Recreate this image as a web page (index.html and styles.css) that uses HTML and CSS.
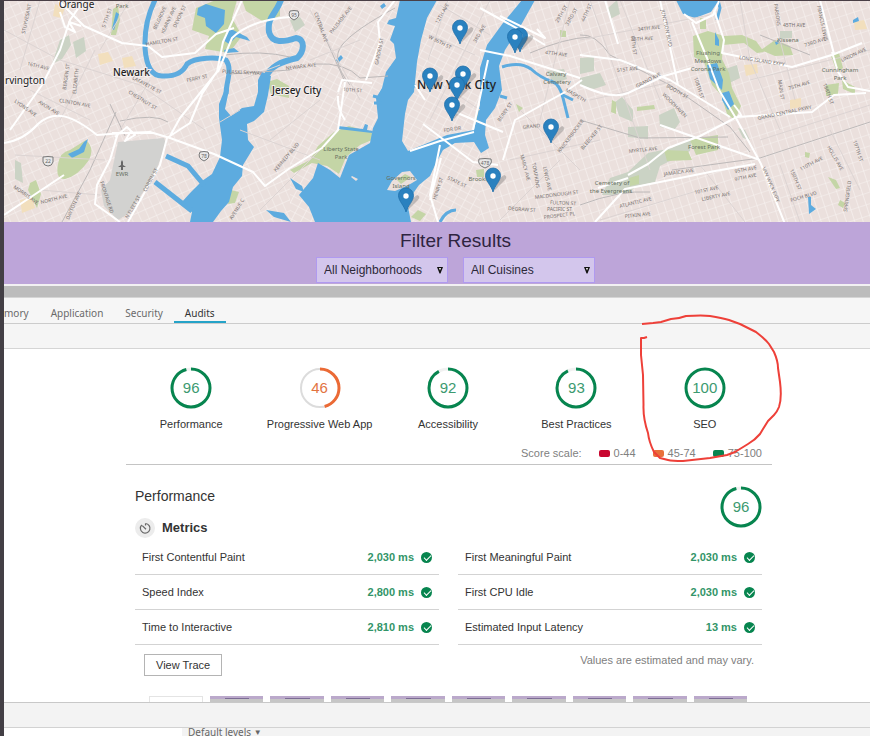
FILE: index.html
```html
<!DOCTYPE html>
<html lang="en">
<head>
<meta charset="utf-8">
<title>Restaurant Reviews audit</title>
<link rel="stylesheet" href="styles.css">
</head>
<body>
<svg class="map" viewBox="4 1 866 221" preserveAspectRatio="xMidYMid slice" role="img" aria-label="Map of New York City restaurants">
  <defs>
    <pattern id="grid-a" width="9" height="7" patternUnits="userSpaceOnUse" patternTransform="rotate(28)"><path d="M0 0H9M0 0V7" stroke="#f8f4f2" stroke-width="1.2"/></pattern>
    <pattern id="grid-b" width="8" height="11" patternUnits="userSpaceOnUse" patternTransform="rotate(-18)"><path d="M0 0H8M0 0V11" stroke="#f8f4f2" stroke-width="1.2"/></pattern>
    <pattern id="grid-c" width="10" height="8" patternUnits="userSpaceOnUse" patternTransform="rotate(66)"><path d="M0 0H10M0 0V8" stroke="#f8f4f2" stroke-width="1.1"/></pattern>
    <g id="pin">
      <path d="M1 15L12 4Q15 0 11-1L6 3Z" fill="#555" opacity=".3"/>
      <path d="M0 16C-1.500 10-7.500 5-7.500-.5A7.500 7.500 0 0 1 7.500-.5C7.500 5 1.500 10 0 16Z" fill="#2a81bf" stroke="#1f6fa9" stroke-width=".8"/>
      <circle r="2.700" fill="#fff"/>
    </g>
  </defs>
  <path class="land" d="M0 0H870V224H0Z"/>
  <path d="M0 0H290V224H0Z" fill="url(#grid-c)"/>
  <path d="M290 0H480V224H290Z" fill="url(#grid-a)"/>
  <path d="M480 0H870V224H480Z" fill="url(#grid-b)"/>

  <g class="beige">
    <path d="M98 54l10-2 5 9-13 4ZM122 58l10-2 4 10-12 2ZM20 200l12-2 3 10-13 5ZM744 65l13-1 1 9-12 3ZM790 100l11-2v9l-11 2ZM854 22l10-2 3 9-12 1ZM55 4l10 4-4 10-8-2Z"/>
  </g>
  <g class="cemetery">
    <path d="M73 42l11-5 2 14-10 7ZM60 40l9-5 2 10-9 14-10 5ZM608 8l9-8 3 14-10 5ZM580 58l14-1v14l-14 3ZM580 78l20-5 6 12-12 4-14-4ZM615 102l4 14 14 6v-12l-11-13ZM628 127l20-1v13l-20-2ZM659 115l15-7 6 14-5 7-15-2ZM722 70l15-5 3 13-15 7ZM547 71l17-2 3 10-14 5ZM780 31h12v7l-12 1ZM738 128l7 2 5 10-7-2ZM290 20l10-3 5 8-10 7ZM15 160l6 3 2 20-8-4Z"/>
    <path d="M602 195l8-17 18-6 20-19 24-5 20-11-2 14-30 15-5 16-18 4-9 7-17 2Z"/>
  </g>
  <path class="airport" d="M118 142L164 138 166 144 154 176 128 214 118 220 104 206 101 190 110 180Z"/>
  <g class="park">
    <path d="M196 8l20-8h21l-5 18 10 18-13 17-24-4 4-13-17-6Z"/>
    <path d="M242 0h38v16l-16 6-18-11Z"/>
    <path d="M113 9l5-3 2 14-4 15h-5ZM58 164q2-12 12-14l16-10q9 8 3 20-11 16-24 19-10 1-7-15ZM30 183l6-3 5 14-4 14-9-18ZM231 190l8 2-4 11-7 1ZM267 82l10-3 12 7v12l-18-4ZM290 170l20-10 8-14 16-14 15-6 24 7-1 7-12 5-14 12-7 17-12-8-15-3-18 10ZM360 152l8 1-4 8-6-1ZM434 155l5-2-6 16-4 3ZM476 118l6-16 1 14-7 12ZM516 104l7 4-4 4ZM476 170l8-1v8h-7Z"/>
    <path d="M693 36l15-5 16 5 18-1 14 6 8 11-7 1-13-10-21 2-1 14 7 14 3 15 9 18-6 14-8-6-6-19-9-10-8-23-10-5ZM761 50l14-10 15 6 3 9-18 1Z"/>
    <path d="M690 140l16-3 12-2v15l-22 5ZM664 150l24 1 4 9-25 1ZM629 178l10-3v9l-9 2ZM637 107l17-2 1 4-18 2ZM831 56l8-3 4 15-6 4ZM842 80l13 7v7l-12-5ZM826 85l13-2-1 11-12 2ZM828 177l8 3 4 8-4 1ZM612 100l4 2v12l-5-2ZM700 18l6 1v10h-6Z"/>
    <path d="M418 210l8 4-6 7-9-4ZM560 30l6 1v6h-6ZM805 152l5 1-1 5-4-1ZM840 200l5 3-2 5-5-3Z"/>
  </g>
  <g class="water">
    <path d="M198 8l8-4 19 6-1 14-8 9-10-7-1-8-8-3ZM223 40l6-12 18 9 3 4-14-4-7 7ZM224 50l10-2 5 4-14 1Z"/>
    <path d="M229 90L225 109 231 116 242 108 254 106 258 92 258 80 262 72 271 76 268 95 264 112 254 121 247 124 248 140 254 147 243 165 242 176 233 187 229 202 221 211 213 222H190L192 212 181 203 191 192 202 181 212 174 220 157 222 140 219 118 219 104 227 84Z"/>
    <path d="M400 0H437L427 18 421 40 417 62 414 92 408 100 405 114 402 141 408 151 430 142 447 135 474 130 480 105 480 68 487 45 503 23 522 0H535L520 27 505 50 499 66 502 90 495 108 486 120 485 135 489 148 481 153 474 142 455 143 443 150 435 165 430 176 419 185 407 202 411 222H315L309 207 299 195 313 178 318 163 330 170 340 178 349 155 370 143 373 128 378 118 376 98 382 88 386 72 396 58 394 44 390 40 395 26 387 24 389 20 396 18Z"/>
    <path d="M676 0H719L711 12 695 18 683 14ZM707 65l10-2 6 17-1 10-12-11ZM722 93l7-2 5 13-6 6-6-10ZM68 154l11-5 5-7 4-3-4 13-12 6ZM116 12l3 2-5 16-2-1ZM808 197h3v8l5 4-7 5ZM853 20l5-3 1 4-6 2ZM266 210l18 3 7 9-17-5ZM290 178l12 8 2 6-8-3ZM338 126l25 3 2-5 3 1-1 5 6 1-1 2-34-4ZM715 32l4 8v6l-4-1ZM336 60l5-5 2 3-5 5ZM380 6l4-3 2 3-4 3ZM775 42l3-2 1 3-3 2Z"/>
  </g>
  <g class="river">
    <path stroke-width="5" d="M155 0Q144 22 145 48 147 76 162 76 181 77 187 64C195 57 218 57 226 60 233 70 226 82 226 94"/>
    <path stroke-width="6" d="M281 0C276 14 267 17 269 32 272 44 284 42 296 38 306 39 304 52 297 58 280 62 271 66 265 78"/>
    <path stroke-width="5" d="M166 156L188 166 204 185M155 182L192 211"/>
    <path stroke-width="3" d="M502 67Q520 61 531 69 541 78 551 81 560 84 563 98L568 118M563 95l10 5M500 96l7 2M718 0l2 8-3 12M440 222q6-12 16-12M373 96l8 2M374 103h8M410 86h6"/>
  </g>
  <path class="land" d="M387 190L392 181 402 172 410 171 417 180 407 186 395 191ZM352 176l6 3-2 2-5-4Z"/>
  <path class="park" d="M397 180l8-6 6 3-10 7Z"/>

  <g class="rail">
    <path d="M62 222L90 170 116 112M120 121Q155 113 168 122M225 55Q262 50 290 57M230 74L290 70M350 85Q330 60 342 45T395 8M315 64q30-2 45 14l28-2M530 53Q565 38 590 37M580 35q15-2 30 20l60 30 60 42 20 25M580 120l60 18 88-1M672 170L760 158 870 122M760 35l50 20M110 104l15 32M345 82l-20-45M580 205q40-15 70-13"/>
  </g>
  <g class="minor">
    <path d="M4 30L60 60 140 85 205 130M95 50L60 120M150 80L120 130M40 0L20 70M130 0L100 50M30 90l60 30M15 155l90 5M40 190l60 5M240 110l-20 12M240 80l40-15M270 140l50-40M260 210l60-60M240 130l80 30M310 10l50 90M360 40l-50 20M440 5l50 30M430 35l45 20M420 70l60 40M448 0l-20 60M490 0l-60 120M590 0l60 170M620 0l40 100M580 40l130-25M590 100l90-20M740 0l10 60 30 70M775 20l20 80M750 80l120-30M760 140l110-35M780 165l20 57M830 130l30 60M700 190l-100 30M700 165l45 57M560 160l-60 60M520 110l60 60M570 0l-30 120M600 140l-90 20"/>
  </g>
  <g class="road">
    <path d="M58 0L84 26 122 43 148 46 162 57 195 53 216 34 234 28M84 0L70 20 60 50 42 85 10 130M4 143Q24 140 38 124C54 109 72 115 97 135L124 133 150 132 170 138 214 154 253 172 265 186 290 168M118 133L110 160 97 185 95 204 120 222M112 133h42M170 136L180 118 217 72 223 42 242 0M214 76L202 94 190 123 167 138 160 165 128 222M218 72L232 38Q250 20 290 17M4 215q30-20 60-40M60 12l5 15 10 5-6-10 12 4M115 137l12-10 8 8-10 6 6-10"/>
    <path d="M290 168L322 148 338 130 345 82M345 120q-8-12-7-24M338 92l4-12 30 3M395 0l-17 22 2 20-14 38M415 85l10 15M410 151l30-10 34-9M423 124l50 38 25 3M455 112l48 20M440 145l-10 50 8 27M430 200l11-42M503 160l12-40 50-28 17-12M480 50l30 6 70 22M500 16l45 22-8-9M480 8l40 22 25 15M473 130l15-70"/>
    <path d="M580 85Q612 100 628 93L664 76 692 68M605 0l13 44M580 55l40 5 50 20 60 37M660 0l18 85M684 14l12 9 17-8 6-14M692 22l15 36 12 32 18 30 24 44 24 60M714 10l10 30-2 13 70 14 40-12 30-12M737 117L700 136 668 148 648 164 628 175M737 117l75-5 22-17 32-2M734 105q12 15 4 10M832 52l6 20 10 15 22 4M755 164l-40 7-90 18-30 33M820 0l14 54M760 160l-100-35M628 178l-30 10"/>
  </g>

  <g class="streets">
    <text transform="translate(25 34) rotate(-78)">STUYVESANT</text><text transform="translate(27 65) rotate(14)">16TH AVE</text>
    <text transform="translate(14 102) rotate(35)">LYONS AVE</text><text transform="translate(38 103) rotate(32)">AVON AVE</text>
    <text transform="translate(59 102) rotate(10)">CLINTON AVE</text><text transform="translate(66 90) rotate(-82)">BERGEN ST</text><text transform="translate(76 94) rotate(-84)">ELIZABETH</text>
    <text transform="translate(105 28) rotate(-70)">S 7TH ST</text><text transform="translate(146 46) rotate(-10)">HAMILTON ST</text><text transform="translate(132 79) rotate(28)">LAFAYETTE ST</text><text transform="translate(128 93) rotate(32)">CHESTNUT ST</text>
    <text transform="translate(156 30) rotate(-65)">BELGROVE</text><text transform="translate(164 34) rotate(-65)">KEARNY AVE</text><text transform="translate(176 28) rotate(-65)">DEVON ST</text>
    <text transform="translate(187 82) rotate(-12)">FERRY ST</text><text transform="translate(222 73) rotate(3)">PULASKI SKYWAY</text><text transform="translate(286 70) rotate(-7)">NEWARK AVE</text>
    <text transform="translate(13 188) rotate(35)">MORRIS AVE</text><text transform="translate(41 204) rotate(-14)">NORTH AVE</text><text transform="translate(69 220) rotate(-66)">DAYTON AVE</text><text transform="translate(100 182) rotate(72)">FRONTAGE RD</text><text transform="translate(128 219) rotate(-60)">N FLEET ST</text><text transform="translate(146 192) rotate(-62)">CORBIN ST</text><text transform="translate(232 220) rotate(-58)">AVENUE C</text><text transform="translate(276 172) rotate(-50)">KENNEDY BLVD</text>
    <text transform="translate(314 13) rotate(70)">CENTRAL AVE</text><text transform="translate(332 34) rotate(-52)">PALISADE AVE</text><text transform="translate(378 65) rotate(-78)">GARDEN ST</text><text transform="translate(343 91) rotate(4)">10TH ST</text>
    <text transform="translate(438 24) rotate(-60)">12TH AVE</text><text transform="translate(428 38) rotate(27)">W 36TH ST</text><text transform="translate(476 43) rotate(-60)">3RD AVE</text><text transform="translate(444 132) rotate(-8)">FDR DR</text>
    <text transform="translate(558 23) rotate(-60)">29TH ST</text><text transform="translate(568 26) rotate(-60)">33RD ST</text><text transform="translate(545 54) rotate(7)">47TH AVE</text><text transform="translate(565 91) rotate(30)">MASPETH</text><text transform="translate(500 122) rotate(-55)">BERRY ST</text><text transform="translate(523 129) rotate(-6)">GRAND</text>
    <text transform="translate(436 200) rotate(-72)">HENRY ST</text><text transform="translate(447 179) rotate(26)">STATE ST</text><text transform="translate(520 155) rotate(75)">MARCY AVE</text><text transform="translate(532 163) rotate(80)">TOMPKINS</text><text transform="translate(543 167) rotate(78)">LEWIS AVE</text><text transform="translate(535 199) rotate(-7)">MACDONOUGH ST</text><text transform="translate(550 204) rotate(3)">FULTON ST</text><text transform="translate(547 211)">PACIFIC ST</text><text transform="translate(508 210) rotate(4)">DEGRAW ST</text><text transform="translate(544 219) rotate(-7)">PROSPECT PL</text><text transform="translate(560 153) rotate(-53)">KNICKERBOCKER</text>
    <text transform="translate(584 22) rotate(-65)">44TH ST</text><text transform="translate(638 31) rotate(-6)">34TH AVE</text><text transform="translate(631 41) rotate(-3)">35TH AVE</text><text transform="translate(631 36) rotate(83)">69TH ST</text><text transform="translate(661 10) rotate(78)">JUNCTION BLVD</text><text transform="translate(617 72) rotate(-6)">51ST AVE</text><text transform="translate(637 88) rotate(-28)">GRAND AVE</text><text transform="translate(666 87) rotate(30)">BOOTH ST</text><text transform="translate(662 95) rotate(45)">WOODHAVEN</text><text transform="translate(694 78) rotate(72)">108TH ST</text>
    <text transform="translate(739 59) rotate(9)">LONG ISLAND EXPY</text><text transform="translate(758 120) rotate(-12)">GRAND CENTRAL PKWY</text><text transform="translate(789 90) rotate(-16)">75TH AVE</text><text transform="translate(805 47) rotate(-18)">73RD AVE</text><text transform="translate(783 27)">45TH AVE</text><text transform="translate(817 6) rotate(78)">FRANCIS LEWIS</text><text transform="translate(774 4) rotate(82)">PARSONS</text><text transform="translate(778 80) rotate(82)">MAIN ST</text><text transform="translate(823 84) rotate(70)">188TH ST</text><text transform="translate(842 62) rotate(-25)">UNION AVE</text>
    <text transform="translate(629 153) rotate(-6)">MYRTLE AVE</text><text transform="translate(664 176) rotate(-8)">JAMAICA AVE</text><text transform="translate(583 150) rotate(-50)">BLEECKER ST</text><text transform="translate(695 194) rotate(-12)">101ST AVE</text><text transform="translate(702 201) rotate(-12)">LIBERTY AVE</text><text transform="translate(735 173) rotate(-10)">95TH AVE</text><text transform="translate(735 181) rotate(-12)">97TH AVE</text><text transform="translate(801 171) rotate(-28)">110TH AVE</text><text transform="translate(762 168) rotate(67)">VAN WYCK EXPY</text><text transform="translate(790 170) rotate(68)">150TH ST</text><text transform="translate(827 147) rotate(60)">HOLLIS AVE</text><text transform="translate(847 212) rotate(-82)">SPRINGFIELD</text><text transform="translate(853 141) rotate(72)">197TH ST</text><text transform="translate(620 208) rotate(-14)">ATLANTIC AVE</text><text transform="translate(625 218) rotate(-6)">PITKIN AVE</text><text transform="translate(791 202) rotate(-16)">FOCH BLVD</text>
  </g>
  <g class="green-labels" text-anchor="middle">
    <text x="122" y="8">Park</text><text x="341" y="151">Liberty State</text><text x="341" y="159">Park</text><text x="401" y="180">Governors</text><text x="401" y="188">Island</text>
    <text x="556" y="76">Calvary</text><text x="557" y="84">Cemetery</text><text x="708" y="55">Flushing</text><text x="708" y="63">Meadows</text><text x="708" y="71">Corona Park</text><text x="788" y="42">Kissena</text><text x="840" y="72">Cunningham</text><text x="840" y="80">Park</text><text x="704" y="149">Forest Park</text><text x="612" y="185">Cemetery of</text><text x="611" y="193">the Evergreens</text><text x="481" y="181">Brooklyn</text><text x="122" y="176">EWR</text>
  </g>
  <path d="M122 160l1 2v3l3 2h-3v3h-2v-3h-3l3-2v-3Z" fill="#666"/>
  <g class="shields">
    <g transform="translate(48 161)"><path d="M-5-4Q0-5 5-4V1Q4 5 0 5T-5 1Z"/><text y="2" text-anchor="middle">22</text></g>
    <g transform="translate(204 156)"><path d="M-4-4Q0-5 4-4 7 2 0 5-7 2-4-4Z"/><text y="2" text-anchor="middle">78</text></g>
    <g transform="translate(294 15)"><path d="M-4-4Q0-5 4-4 7 2 0 5-7 2-4-4Z"/><text y="2" text-anchor="middle">95</text></g>
    <g transform="translate(485 163)"><path d="M-6-4Q0-5 6-4 8 2 0 5-8 2-6-4Z"/><text y="2" text-anchor="middle">478</text></g>
  </g>
  <g class="cities">
    <text x="59" y="8">Orange</text><text x="5" y="84">rvington</text><text class="mid" x="113" y="76">Newark</text><text class="mid" x="272" y="94">Jersey City</text><text class="big" x="417" y="89">New York City</text>
  </g>
  <use href="#pin" x="460" y="28"/><use href="#pin" x="520" y="36"/><use href="#pin" x="515" y="37"/><use href="#pin" x="430" y="76"/><use href="#pin" x="463" y="74"/><use href="#pin" x="457" y="85"/><use href="#pin" x="452" y="105"/><use href="#pin" x="551" y="127"/><use href="#pin" x="493" y="176"/><use href="#pin" x="406" y="196"/>
</svg>

<section class="filters">
  <h1>Filter Results</h1>
  <div class="filter-row">
    <div class="pick"><select aria-label="Neighborhood"><option>All Neighborhoods</option></select><svg viewBox="0 0 8 8"><path d="M1 1H7L4.500 7.500H3.500Z" fill="#111"/><path d="M3 2H5L4 4.500Z" fill="#fff"/></svg></div>
    <div class="pick"><select aria-label="Cuisine"><option>All Cuisines</option></select><svg viewBox="0 0 8 8"><path d="M1 1H7L4.500 7.500H3.500Z" fill="#111"/><path d="M3 2H5L4 4.500Z" fill="#fff"/></svg></div>
  </div>
</section>
<div class="splitter"></div>
<nav class="tabs"><a href="#memory">mory</a><a href="#application">Application</a><a href="#security">Security</a><a class="active" href="#audits">Audits</a></nav>
<div class="toolbar"></div>

<main class="panel">
  <div class="report">
    <div class="gauges">
      <div class="gauge"><div class="dial"><svg viewBox="0 0 42 42"><circle class="track" cx="21" cy="21" r="19"/><circle class="arc" cx="21" cy="21" r="19" pathLength="100" stroke-dasharray="96 100"/></svg><span>96</span></div><p>Performance</p></div>
      <div class="gauge average"><div class="dial"><svg viewBox="0 0 42 42"><circle class="track" cx="21" cy="21" r="19"/><circle class="arc" cx="21" cy="21" r="19" pathLength="100" stroke-dasharray="46 100"/></svg><span>46</span></div><p>Progressive Web App</p></div>
      <div class="gauge"><div class="dial"><svg viewBox="0 0 42 42"><circle class="track" cx="21" cy="21" r="19"/><circle class="arc" cx="21" cy="21" r="19" pathLength="100" stroke-dasharray="92 100"/></svg><span>92</span></div><p>Accessibility</p></div>
      <div class="gauge"><div class="dial"><svg viewBox="0 0 42 42"><circle class="track" cx="21" cy="21" r="19"/><circle class="arc" cx="21" cy="21" r="19" pathLength="100" stroke-dasharray="93 100"/></svg><span>93</span></div><p>Best Practices</p></div>
      <div class="gauge"><div class="dial"><svg viewBox="0 0 42 42"><circle class="arc" cx="21" cy="21" r="19"/></svg><span>100</span></div><p>SEO</p></div>
    </div>
    <div class="scale"><span>Score scale:</span><span class="key fail">0-44</span><span class="key avg">45-74</span><span class="key pass">75-100</span></div>
    <section class="category">
      <header class="category-head">
        <div>
          <h2>Performance</h2>
          <h3><span class="clock"><svg viewBox="0 0 20 20" fill="none" stroke="#666" stroke-width="1.200"><path d="M10.500 5.500V7.500M10.500 5.500A4.800 4.800 0 1 1 6.700 7M7.300 7.600L11 11.200"/></svg></span>Metrics</h3>
        </div>
        <div class="dial"><svg viewBox="0 0 42 42"><circle class="track" cx="21" cy="21" r="19"/><circle class="arc" cx="21" cy="21" r="19" pathLength="100" stroke-dasharray="96 100"/></svg><span>96</span></div>
      </header>
      <div class="metrics">
        <div class="metric"><span>First Contentful Paint</span><b>2,030 ms</b><i></i></div>
        <div class="metric"><span>First Meaningful Paint</span><b>2,030 ms</b><i></i></div>
        <div class="metric"><span>Speed Index</span><b>2,800 ms</b><i></i></div>
        <div class="metric"><span>First CPU Idle</span><b>2,030 ms</b><i></i></div>
        <div class="metric"><span>Time to Interactive</span><b>2,810 ms</b><i></i></div>
        <div class="metric"><span>Estimated Input Latency</span><b>13 ms</b><i></i></div>
      </div>
      <div class="after"><button type="button">View Trace</button><p>Values are estimated and may vary.</p></div>
      <div class="film"><i class="blank"></i><i></i><i></i><i></i><i></i><i></i><i></i><i></i><i></i><i></i></div>
    </section>
    <svg class="scribble" viewBox="640 314 142 149"><path d="M642 324L653 323 661 322 671 319Q678 319 686 316 703 315 710 316 722 318 729 320L740 324 756 332Q765 339 769 344L774 352Q778 361 778 368L780 382Q782 398 779 407 777 412 774 415L768 421 763 429 760 434Q755 440 748 444L735 452 727 455 710 458 683 461Q672 461 668 460L660 458 654 452Q649 442 648 433 643 418 643.500 405L643 375 641 355 641 338 644 338 647 337"/></svg>
  </div>
</main>
<div class="drawer-bar"></div>
<footer class="console"><button type="button">Default levels <span>▼</span></button></footer>
</body>
</html>
```
FILE: styles.css
```css
* { box-sizing: border-box; }
body {
  margin: 0;
  min-height: 100vh;
  border-top: 1px solid #493f46;
  border-left: 4px solid #433f45;
  background: #fff;
  color: #333;
  font: 11px/16px "Liberation Sans", Arial, sans-serif;
  overflow: hidden;
  display: flex;
  flex-direction: column;
}
h1, h2, h3, p { margin: 0; font-weight: 400; }

.map { display: block; width: 100%; height: 221px; flex: none; font-family: "Noto Sans", "Open Sans", sans-serif; }
.land { fill: #ebe0dd; }
.beige { fill: #f2dfbd; }
.cemetery { fill: #cbd3c5; }
.airport { fill: #d2d2d0; }
.park { fill: #c4d5a6; }
.water { fill: #5dabdf; }
.river { fill: none; stroke: #5dabdf; }
.rail { fill: none; stroke: #bdb9b9; stroke-width: 1; }
.road { fill: none; stroke: #fff; stroke-width: 2; stroke-linejoin: round; }
.minor { fill: none; stroke: #dcd4d3; stroke-width: 1; }
.streets { fill: #77716f; font-size: 5px; }
.green-labels { fill: #66705f; font-size: 6px; }
.shields { fill: #666; font-size: 5px; }
.shields path { fill: #e8e8e8; stroke: #777; }
.cities { fill: #222; font-size: 10px; stroke: #f4eeee; stroke-width: 2px; paint-order: stroke; }
.cities .mid { font-weight: 500; }
.cities .big { font-size: 12px; font-weight: 500; stroke: none; }

.filters { padding: 7px 0 1px 37px; background: #bda5d9; text-align: center; }
h1 { color: #2e2440; font-size: 19px; line-height: 24px; margin-bottom: 4px; }
.filter-row { display: flex; justify-content: center; gap: 15px; }
.pick { position: relative; width: 132px; }
.pick select {
  display: block;
  appearance: none;
  width: 100%;
  height: 26px;
  padding: 0 7px;
  border: 1px solid #b09af0;
  border-radius: 0;
  background: #d3c6ec;
  color: #2c2838;
  font: 12px/16px "Liberation Sans", Arial, sans-serif;
}
.pick svg { position: absolute; top: 9px; right: 4px; width: 8px; height: 8px; pointer-events: none; }

.splitter { height: 14px; flex: none; border-top: 2px solid #f2f0f2; border-bottom: 1px solid #d5d5d5; background: #bcbcbc; }
.tabs { display: flex; height: 26px; flex: none; border-bottom: 1px solid #ccc; background: #f6f6f6; font: 10px/16px "Noto Sans", sans-serif; }
.tabs a { padding: 7px 11px 0; color: #6a6a6a; text-decoration: none; }
.tabs a:first-child { padding-left: 0; }
.tabs .active { border-bottom: 2px solid #25a3c8; color: #333; }
.toolbar { height: 25px; flex: none; border-bottom: 1px solid #d5d5d5; background: #f5f5f5; }

.panel { flex: 1 0 auto; padding: 0 0 0 24px; }
.report { position: relative; max-width: 646px; margin: 0 auto; }
.gauges { display: grid; grid-template-columns: repeat(5, 1fr); padding: 18px 3px 0 1px; }
.gauge { display: flex; flex-direction: column; align-items: center; gap: 7px; white-space: nowrap; }
.dial { position: relative; display: grid; place-items: center; width: 42px; height: 42px; color: #3c9a70; font-size: 15px; }
.dial > * { grid-area: 1 / 1; }
.dial svg { width: 42px; height: 42px; transform: rotate(-90deg); fill: none; }
.track { stroke: #f1f1f1; stroke-width: 3px; }
.arc { stroke: #07854f; stroke-width: 3px; }
.average .dial { color: #e2733f; }
.average .track { stroke: #dcdcdc; stroke-width: 2px; }
.average .arc { stroke: #eb6a35; }

.scale { display: flex; justify-content: flex-end; align-items: center; padding: 13px 10px 3px; border-bottom: 1px solid #c4c4c4; color: #808080; }
.key { display: flex; align-items: center; margin-left: 17px; }
.key::before { content: ""; width: 11px; height: 7px; margin-right: 4px; border-radius: 2px; background: #c8062f; }
.avg::before { background: #e8703a; }
.pass::before { background: #07854f; }

.category { padding: 21px 10px 0 9px; }
.category-head { display: flex; justify-content: space-between; }
h2 { font-size: 14px; line-height: 20px; }
h3 { display: flex; align-items: center; gap: 7px; margin-top: 12px; font-size: 13px; font-weight: 700; line-height: 20px; }
.clock { width: 20px; height: 20px; border-radius: 50%; background: #ececec; }
.clock svg { display: block; width: 20px; height: 20px; }
.metrics { display: grid; grid-template-columns: 1fr 1fr; column-gap: 19px; margin-top: 2px; }
.metric { display: flex; align-items: center; height: 35px; padding: 0 7px; border-bottom: 1px solid #d3d3d3; }
.metric span { flex: 1; }
.metric b { color: #329568; }
.metric i { position: relative; width: 11px; height: 11px; margin-left: 7px; border-radius: 50%; background: #07854f; }
.metric i::after { content: ""; position: absolute; left: 3px; top: 3px; width: 6px; height: 3px; border: solid #fff; border-width: 0 0 1px 1px; transform: rotate(-45deg); }
.after { display: flex; justify-content: space-between; align-items: flex-start; padding: 9px 8px 0 9px; color: #808080; }
.after p { margin-top: -2px; }
.after button { height: 22px; padding: 0 11px; border: 1px solid #b4b4b4; background: #fff; color: #333; font: 11px/16px "Liberation Sans", Arial, sans-serif; }
.film { display: grid; grid-template-columns: repeat(10, 1fr); gap: 7px; padding: 20px 15px 0 14px; }
.film i { height: 6px; background: linear-gradient(90deg, transparent 28%, #7c6c95 28%, #7c6c95 74%, transparent 74%) 0 2px / 100% 1px no-repeat, linear-gradient(#bba9cb 0 3px, #c6c6c6 3px); }
.film .blank { border: 1px solid #e4e4e4; border-bottom: 0; background: #fff; }
.scribble { position: absolute; top: -35px; right: -10px; width: 142px; height: 149px; fill: none; stroke: #ee4039; stroke-width: 2px; stroke-linejoin: round; pointer-events: none; }

.drawer-bar { height: 26px; flex: none; border-top: 1px solid #c8c8c8; border-bottom: 1px solid #d2d2d2; background: #f3f3f3; }
.console { height: 9px; flex: none; padding-left: 178px; background: linear-gradient(90deg, #fff 178px, #f3f3f3 178px); }
.console button { display: block; padding: 0 6px; border: 0; background: none; color: #666; font: 10px/9px "Noto Sans", sans-serif; }
.console span { font-size: 8px; line-height: 8px; vertical-align: 1px; }
```
